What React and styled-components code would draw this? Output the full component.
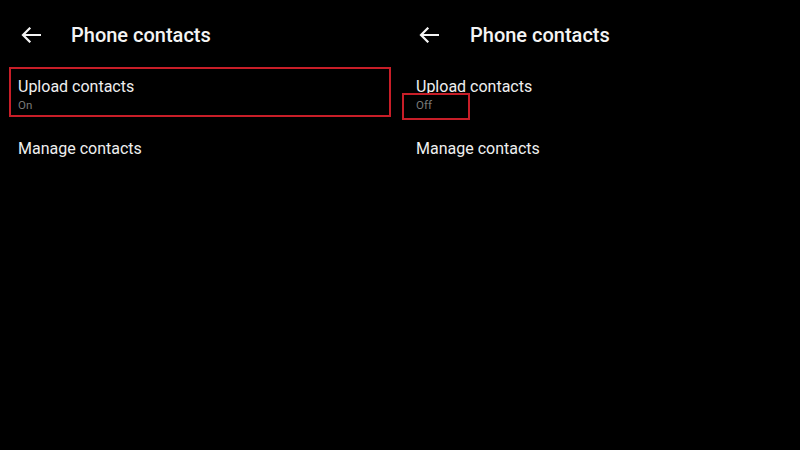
import styled, { createGlobalStyle } from "styled-components";

const GlobalStyle = createGlobalStyle`
  html, body {
    margin: 0;
    padding: 0;
    background: #000;
  }
  body {
    font-family: Roboto, "Noto Sans", "Liberation Sans", sans-serif;
    color: #f2f2f2;
  }
`;

const Screen = styled.div`
  display: flex;
  width: 800px;
  height: 450px;
  background: #000;
  overflow: hidden;
`;

const Panel = styled.div`
  display: flex;
  flex-direction: column;
  width: ${(p) => p.$width}px;
  flex-shrink: 0;
`;

const Header = styled.div`
  display: flex;
  align-items: center;
  height: 67px;
  padding-left: ${(p) => p.$inset}px;
  padding-top: 2px;
  box-sizing: border-box;
`;

const BackBtn = styled.button`
  display: flex;
  align-items: center;
  justify-content: center;
  width: 20px;
  height: 20px;
  padding: 0;
  margin: 0;
  border: none;
  background: transparent;
  cursor: pointer;
`;

const Title = styled.h1`
  margin: 0 0 0 ${(p) => p.$gap}px;
  font-size: 20px;
  font-weight: 500;
  color: #f4f4f4;
  letter-spacing: 0;
`;

const Row = styled.div`
  position: relative;
  display: flex;
  flex-direction: column;
  width: 382px;
  height: ${(p) => p.$height}px;
  margin: ${(p) => p.$top || 0}px 0 0 9px;
  padding: ${(p) => p.$pad || 0}px 0 0 9px;
  box-sizing: border-box;
  box-shadow: ${(p) => (p.$marked ? "inset 0 0 0 2px #c81e28" : "none")};
`;

const RowTitle = styled.div`
  font-size: 16px;
  line-height: 20px;
  color: #efefef;
`;

const RowSub = styled.div`
  font-size: 11.5px;
  line-height: 14px;
  margin-top: 1px;
  color: #7a7a7a;
`;

const Mark = styled.div`
  position: absolute;
  left: -5px;
  top: 26px;
  width: 68px;
  height: 27px;
  box-sizing: border-box;
  border: 2px solid #c81e28;
`;

const ArrowIcon = () => (
  <svg width="20" height="16" viewBox="0 0 20 16" fill="none">
    <path
      d="M19 8H2.5M8.5 1.5L2 8l6.5 6.5"
      stroke="#f4f4f4"
      strokeWidth="2.2"
      strokeLinecap="square"
    />
  </svg>
);

const ContactsPanel = ({ width, inset, gap, status, markRow, markStatus }) => (
  <Panel $width={width}>
    <Header $inset={inset}>
      <BackBtn aria-label="Back">
        <ArrowIcon />
      </BackBtn>
      <Title $gap={gap}>Phone contacts</Title>
    </Header>
    <Row $height={50} $pad={10} $marked={markRow}>
      <RowTitle>Upload contacts</RowTitle>
      <RowSub>{status}</RowSub>
      {markStatus && <Mark />}
    </Row>
    <Row $height={20} $top={22}>
      <RowTitle>Manage contacts</RowTitle>
    </Row>
  </Panel>
);

export default function App() {
  return (
    <>
      <GlobalStyle />
      <Screen>
        <ContactsPanel width={398} inset={21} gap={30} status="On" markRow />
        <ContactsPanel width={402} inset={21} gap={31} status="Off" markStatus />
      </Screen>
    </>
  );
}
